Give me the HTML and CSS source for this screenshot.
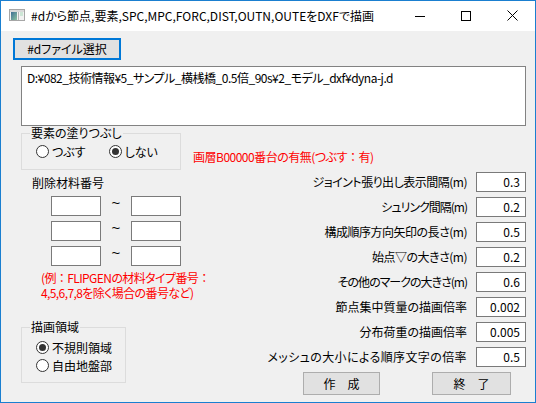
FILE: index.html
```html
<!DOCTYPE html>
<html lang="ja">
<head>
<meta charset="utf-8">
<title>DXF</title>
<link rel="stylesheet" href="styles.css">
</head>
<body>
<div class="window">
  <div class="titlebar">
    <svg class="appicon" width="16" height="12" viewBox="0 0 16 12">
      <defs>
        <linearGradient id="ig" x1="0" y1="0" x2="1" y2="1">
          <stop offset="0" stop-color="#3f6f95"/>
          <stop offset="1" stop-color="#8cc3a0"/>
        </linearGradient>
      </defs>
      <rect x="0.5" y="0.5" width="15" height="11" fill="#f2f2f2" stroke="#a6a6a6"/>
      <rect x="1" y="1" width="14" height="2" fill="#d9d9d9"/>
      <rect x="2" y="3" width="6" height="8" fill="url(#ig)"/>
      <rect x="9" y="3" width="1" height="8" fill="#b4b4b4"/>
      <rect x="11" y="3" width="3" height="4" fill="#cde6d6"/>
    </svg>
    <span class="title">#dから節点,要素,SPC,MPC,FORC,DIST,OUTN,OUTEをDXFで描画</span>
    <div class="controls">
      <span class="ctl"><svg width="10" height="10" viewBox="0 0 10 10"><path d="M0 5.5H10" stroke="#000" stroke-width="1"/></svg></span>
      <span class="ctl"><svg width="10" height="10" viewBox="0 0 10 10"><rect x="0.5" y="0.5" width="9" height="9" fill="none" stroke="#000"/></svg></span>
      <span class="ctl"><svg width="11" height="11" viewBox="0 0 11 11"><path d="M0.5 0.5L10.5 10.5M10.5 0.5L0.5 10.5" stroke="#000" stroke-width="1"/></svg></span>
    </div>
  </div>
  <div class="client">
    <button class="btn btn-select">#dファイル選択</button>
    <div class="pathbox">D:¥082_技術情報¥5_サンプル_横桟橋_0.5倍_90s¥2_モデル_dxf¥dyna-j.d</div>
    <div class="row1">
      <fieldset class="group group-fill">
        <legend>要素の塗りつぶし</legend>
        <div class="radios-h">
          <label class="radio"><span class="dot"></span>つぶす</label>
          <label class="radio"><span class="dot checked"></span>しない</label>
        </div>
      </fieldset>
      <div class="redtext layer-note">画層B00000番台の有無(つぶす<span class="wide">：</span>有)</div>
    </div>
    <div class="main">
      <div class="left">
        <div class="caption">削除材料番号</div>
        <div class="ranges">
          <div class="range"><span class="field"></span><span class="tilde">~</span><span class="field"></span></div>
          <div class="range"><span class="field"></span><span class="tilde">~</span><span class="field"></span></div>
          <div class="range"><span class="field"></span><span class="tilde">~</span><span class="field"></span></div>
        </div>
        <div class="redtext note">(例<span class="wide">：</span>FLIPGENの材料タイプ番号<span class="wide">：</span><br>4,5,6,7,8を除く場合の番号など)</div>
        <fieldset class="group group-area">
          <legend>描画領域</legend>
          <div class="radios-v">
            <label class="radio"><span class="dot checked"></span>不規則領域</label>
            <label class="radio"><span class="dot"></span>自由地盤部</label>
          </div>
        </fieldset>
      </div>
      <div class="right">
        <div class="param"><span class="plabel tight">ジョイント張り出し表示間隔(m)</span><span class="field num">0.3</span></div>
        <div class="param"><span class="plabel tighter">シュリンク間隔(m)</span><span class="field num">0.2</span></div>
        <div class="param"><span class="plabel tight">構成順序方向矢印の長さ(m)</span><span class="field num">0.5</span></div>
        <div class="param"><span class="plabel tight">始点▽の大きさ(m)</span><span class="field num">0.2</span></div>
        <div class="param"><span class="plabel tighter">その他のマークの大きさ(m)</span><span class="field num">0.6</span></div>
        <div class="param"><span class="plabel">節点集中質量の描画倍率</span><span class="field num">0.002</span></div>
        <div class="param"><span class="plabel">分布荷重の描画倍率</span><span class="field num">0.005</span></div>
        <div class="param"><span class="plabel loose">メッシュの大小による順序文字の倍率</span><span class="field num">0.5</span></div>
        <div class="actions">
          <button class="btn btn-act">作　成</button>
          <button class="btn btn-act btn-end">終　了</button>
        </div>
      </div>
    </div>
  </div>
</div>
</body>
</html>
```
FILE: styles.css
```css
* { box-sizing: border-box; }
html, body { margin: 0; padding: 0; }
body {
  font-family: "Noto Sans CJK JP", "Noto Sans", sans-serif;
  font-feature-settings: "palt";
  font-size: 12px;
  line-height: 14px;
  color: #000;
  background: #fff;
}
.window {
  width: 536px;
  height: 403px;
  border: 1px solid #1a7fd0;
  display: flex;
  flex-direction: column;
  background: #f0f0f0;
}
.titlebar {
  height: 30px;
  background: #fff;
  display: flex;
  align-items: center;
  flex: none;
}
.appicon { margin-left: 8px; margin-top: -2px; flex: none; }
.title { margin-left: 6px; font-size: 12px; white-space: nowrap; }
.controls { margin-left: auto; display: flex; height: 29px; align-self: flex-start; }
.ctl { width: 46px; height: 29px; display: flex; align-items: center; justify-content: center; }
.ctl svg { display: block; }

.client {
  flex: 1;
  padding: 7px 9px 0 12px;
  display: flex;
  flex-direction: column;
}
.btn {
  font: inherit;
  font-feature-settings: "palt";
  color: #000;
  background: #e1e1e1;
  border: 1px solid #adadad;
  padding: 0;
  margin: 0;
  display: flex;
  align-items: center;
  justify-content: center;
}
.btn-select {
  width: 108px;
  height: 22px;
  border: 2px solid #0078d7;
  align-self: flex-start;
}
.pathbox {
  margin: 6px 0 0 8px;
  height: 60px;
  background: #fff;
  border: 1px solid #828282;
  padding: 4px 5px;
  white-space: nowrap;
  overflow: hidden;
  letter-spacing: -0.5px;
}
.row1 { display: flex; align-items: flex-start; }
.group {
  margin: 0 0 0 8px;
  padding: 0;
  border: 1px solid #dcdcdc;
  min-width: 0;
}
.group legend {
  padding: 0 1px;
  margin-left: 8px;
  line-height: 14px;
}
.group-fill { width: 160px; height: 44px; }
.radios-h { display: flex; padding: 5px 0 0 14px; gap: 23px; }
.radio { display: flex; align-items: center; gap: 3px; height: 13px; line-height: 13px; }
.dot {
  width: 13px;
  height: 13px;
  border: 1px solid #333;
  border-radius: 50%;
  background: #fff;
  display: flex;
  align-items: center;
  justify-content: center;
  flex: none;
}
.dot.checked::after {
  content: "";
  width: 7px;
  height: 7px;
  border-radius: 50%;
  background: #333;
}
.redtext { color: #ff0000; }
.wide { font-feature-settings: normal; }
.layer-note { margin: 24px 0 0 12px; white-space: nowrap; letter-spacing: -0.5px; }

.main { display: flex; margin-top: 2px; }
.left { width: 200px; flex: none; display: flex; flex-direction: column; }
.caption { margin: 4px 0 0 19px; }
.ranges { margin: 6px 0 0 38px; display: flex; flex-direction: column; gap: 5px; }
.range { display: flex; height: 20px; }
.field {
  width: 50px;
  height: 20px;
  background: #fff;
  border: 1px solid #7a7a7a;
  display: block;
}
.tilde { width: 30px; text-align: center; font-family: "Liberation Sans", sans-serif; font-size: 15px; line-height: 14px; }
.note { margin: 4px 0 0 28px; line-height: 15px; white-space: nowrap; letter-spacing: -0.6px; }
.group-area { width: 105px; height: 63px; margin-top: 20px; }
.radios-v { display: flex; flex-direction: column; gap: 5px; padding: 7px 0 0 14px; }

.right { flex: 1; display: flex; flex-direction: column; gap: 5px; }
.param { display: flex; justify-content: flex-end; align-items: center; gap: 9px; height: 20px; }
.plabel { white-space: nowrap; }
.plabel.tight { letter-spacing: -0.5px; }
.plabel.tighter { letter-spacing: -1px; }
.plabel.loose { letter-spacing: 0.4px; }
.num { text-align: right; padding-right: 5px; line-height: 18px; }
.actions { display: flex; justify-content: flex-end; gap: 52px; padding-right: 15px; }
.btn-act { width: 77px; height: 23px; }
.btn-end { width: 79px; }
```
